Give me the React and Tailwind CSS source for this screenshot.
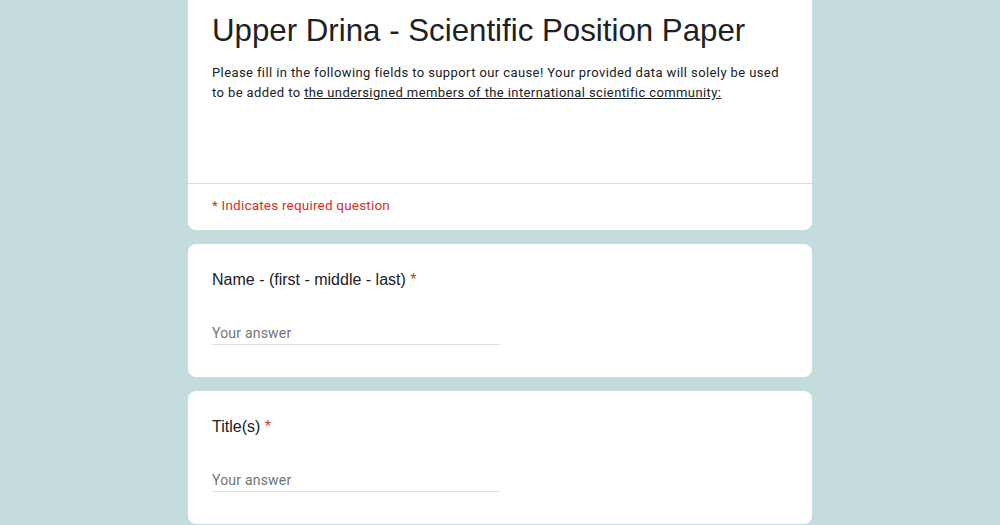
function Question({ label }) {
  return (
    <div className="bg-white rounded-lg px-6 pt-6 pb-8 h-[133px]">
      <div className="text-[16px] leading-6 text-[#202124] font-['Liberation_Sans',Arial,sans-serif]">
        {label} <span className="text-[#d93025]">*</span>
      </div>
      <div className="mt-[21px] w-[288px] h-[32px] flex items-end pb-[1px] border-b border-[#e0e0e0]">
        <span className="text-[14px] leading-5 text-[#70757a] tracking-[0.2px] font-['Roboto',sans-serif]">Your answer</span>
      </div>
    </div>
  );
}

export default function App() {
  return (
    <div className="min-h-[525px] bg-[#c5dcdf] flex justify-center overflow-hidden">
      <div className="w-[624px] flex flex-col gap-[14px]">
        <div className="bg-white rounded-b-lg h-[230px] flex flex-col">
          <div className="px-6 pt-[11px] h-[184px] border-b border-[#dadce0]">
            <h1 className="text-[31.25px] leading-10 text-[#202124] font-['Liberation_Sans',Arial,sans-serif]">
              Upper Drina - Scientific Position Paper
            </h1>
            <p className="mt-3 text-[13px] leading-5 text-[#202124] tracking-[0.4px] whitespace-nowrap font-['Roboto',sans-serif]">
              Please fill in the following fields to support our cause! Your provided data will solely be used
              <br />
              to be added to <span className="underline">the undersigned members of the international scientific community:</span>
            </p>
          </div>
          <div className="px-6 pt-[11px] text-[13.5px] leading-5 text-[#d93025] tracking-[0.2px] font-['Roboto',sans-serif]">
            * Indicates required question
          </div>
        </div>
        <Question label="Name - (first - middle - last)" />
        <Question label="Title(s)" />
      </div>
    </div>
  );
}
